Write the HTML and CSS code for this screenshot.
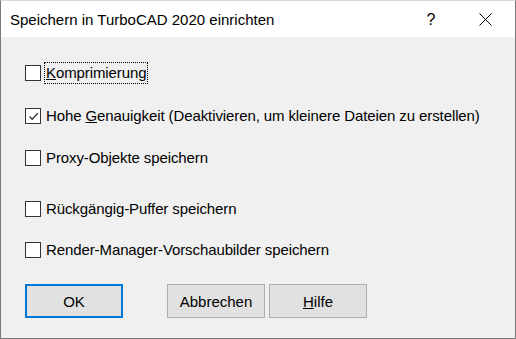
FILE: index.html
```html
<!DOCTYPE html>
<html>
<head>
<meta charset="utf-8">
<link rel="stylesheet" href="styles.css">
</head>
<body>
<div class="window">
  <div class="titlebar">
    <span class="title">Speichern in TurboCAD 2020 einrichten</span>
    <span class="help">?</span>
    <span class="close">
      <svg width="13" height="13" viewBox="0 0 13 13"><path d="M0.5 0.5 L12.5 12.5 M12.5 0.5 L0.5 12.5" stroke="#000" stroke-width="1" fill="none"/></svg>
    </span>
  </div>
  <div class="content">
    <div class="row r1">
      <span class="box"></span>
      <span class="label focus"><u>K</u>omprimierung</span>
    </div>
    <div class="row r2">
      <span class="box"><svg width="13" height="13" viewBox="0 0 13 13"><path d="M2.5 6.5 L5.2 9.2 L10.8 3.2" stroke="#333" stroke-width="1.3" fill="none"/></svg></span>
      <span class="label">Hohe <u>G</u>enauigkeit (Deaktivieren, um kleinere Dateien zu erstellen)</span>
    </div>
    <div class="row r3">
      <span class="box"></span>
      <span class="label">Proxy-Objekte speichern</span>
    </div>
    <div class="row r4">
      <span class="box"></span>
      <span class="label">Rückgängig-Puffer speichern</span>
    </div>
    <div class="row r5">
      <span class="box"></span>
      <span class="label">Render-Manager-Vorschaubilder speichern</span>
    </div>
    <div class="buttons">
      <div class="btn default">OK</div>
      <div class="btn cancel">Abbrechen</div>
      <div class="btn"><u>H</u>ilfe</div>
    </div>
  </div>
</div>
</body>
</html>
```
FILE: styles.css
```css
html, body {
  margin: 0;
  padding: 0;
  background: #f0f0f0;
}
.window {
  width: 516px;
  height: 339px;
  box-sizing: border-box;
  border: 1px solid #7a7a7a;
  border-top: 1px solid #d9d9d9;
  background: #f0f0f0;
  font-family: "Liberation Sans", Arial, sans-serif;
  font-size: 15px;
  color: #000;
  display: flex;
  flex-direction: column;
}
.titlebar {
  height: 36px;
  background: #fff;
  display: flex;
  align-items: center;
}
.title {
  margin-left: 9px;
  font-size: 15px;
  flex: 1;
  padding-top: 1px;
}
.help {
  width: 14px;
  margin-right: 41px;
  font-size: 16px;
  text-align: center;
  padding-top: 1px;
}
.close {
  width: 13px;
  height: 13px;
  margin-right: 23px;
  display: flex;
}
.content {
  flex: 1;
  padding: 25px 0 0 24px;
  display: flex;
  flex-direction: column;
}
.row {
  height: 22px;
  display: flex;
  align-items: center;
}
.r2 { margin-top: 21px; }
.r3 { margin-top: 20px; }
.r4 { margin-top: 29px; }
.r5 { margin-top: 19px; }
.box {
  width: 14px;
  height: 14px;
  border: 1px solid #333;
  background: #fff;
  flex: none;
  display: flex;
  align-items: center;
  justify-content: center;
}
.label {
  margin-left: 3px;
  white-space: nowrap;
  padding: 1px 1px 2px;
  border: 1px dotted transparent;
  letter-spacing: -0.1px;
}
.label.focus {
  border: 1px dotted #000;
}
.buttons {
  margin-top: 23px;
  display: flex;
}
.btn {
  width: 96px;
  height: 32px;
  border: 1px solid #adadad;
  background: #e1e1e1;
  display: flex;
  align-items: center;
  justify-content: center;
  margin-right: 4px;
}
.btn.default {
  border: 2px solid #0078d7;
  width: 94px;
  height: 30px;
  margin-right: 44px;
}
```
